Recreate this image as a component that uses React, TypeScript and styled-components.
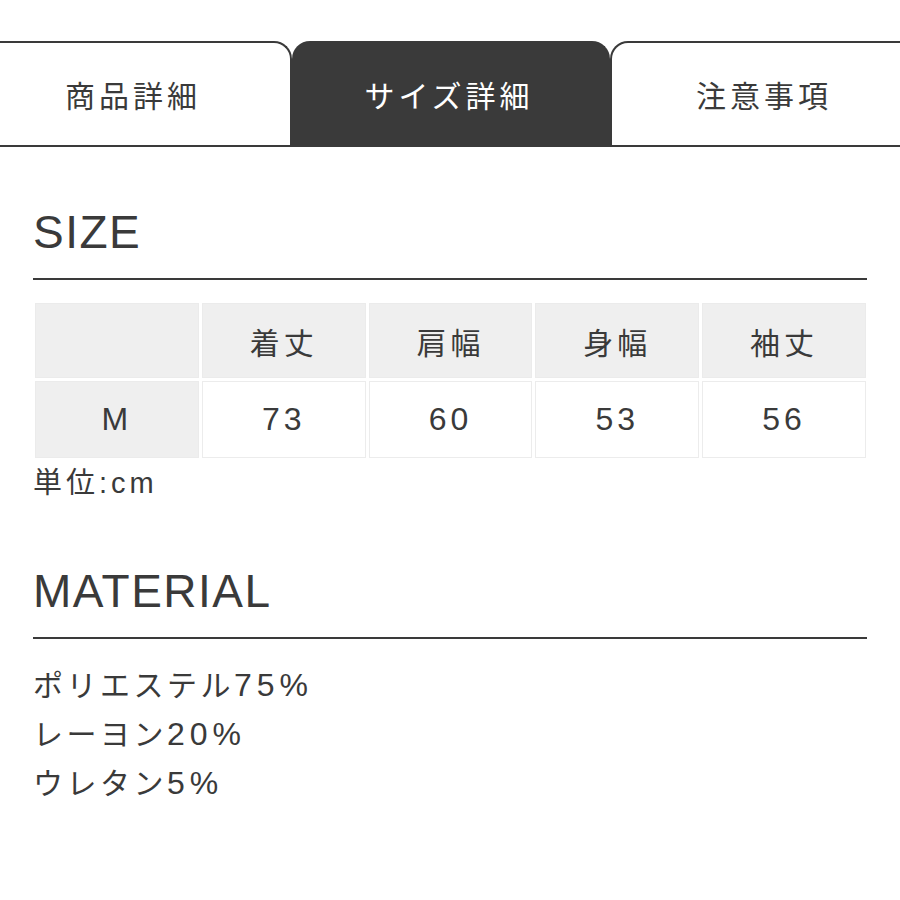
import React from "react";
import styled, { createGlobalStyle } from "styled-components";

const Global = createGlobalStyle`
  html, body { margin: 0; padding: 0; background: #fff; }
  body { overflow: hidden; font-family: "Liberation Sans", "Noto Sans CJK JP", sans-serif; color: #3a3a3a; }
`;

const Page = styled.div`
  width: 900px;
  height: 900px;
  overflow: hidden;
  background: #fff;
`;

const TabStrip = styled.div`
  margin-top: 41px;
  margin-left: -26px;
  width: 954px;
  display: flex;
  border-bottom: 2px solid #3a3a3a;
`;

const Tab = styled.div<{ $active?: boolean; $shift?: number }>`
  box-sizing: border-box;
  width: 318px;
  height: 104px;
  display: flex;
  align-items: center;
  justify-content: center;
  border: 2px solid #3a3a3a;
  border-bottom: none;
  border-radius: 18px 18px 0 0;
  background: ${(p) => (p.$active ? "#3a3a3a" : "#fff")};
  color: ${(p) => (p.$active ? "#fff" : "#3a3a3a")};
  font-family: "Noto Sans CJK JP", sans-serif;
  font-size: 30px;
  letter-spacing: 4px;
  padding-right: ${(p) => p.$shift ?? 0}px;
`;

const Content = styled.div`
  padding: 0 33px;
`;

const Heading = styled.h2<{ $top: number }>`
  margin: ${(p) => p.$top}px 0 0;
  font-family: "Liberation Sans", "Noto Sans CJK JP", sans-serif;
  font-weight: 400;
  font-size: 46px;
  line-height: 46px;
  letter-spacing: 1.5px;
  color: #3a3a3a;
  padding-bottom: 23px;
  border-bottom: 2px solid #3a3a3a;
`;

const Grid = styled.div`
  margin: 23px 1px 0 2px;
  display: grid;
  grid-template-columns: repeat(5, 1fr);
  grid-template-rows: 75px 77px;
  gap: 3px;
`;

const Cell = styled.div<{ $shaded?: boolean }>`
  box-sizing: border-box;
  display: flex;
  align-items: center;
  justify-content: center;
  background: ${(p) => (p.$shaded ? "#efefef" : "#fff")};
  border: 1px solid ${(p) => (p.$shaded ? "#ebebeb" : "#ececec")};
  font-family: "Liberation Sans", "Noto Sans CJK JP", sans-serif;
  font-size: 30px;
  letter-spacing: 4px;
  color: #3a3a3a;
`;

const Num = styled.span`
  font-size: 32px;
  letter-spacing: 4px;
`;

const Unit = styled.div`
  margin-top: 5px;
  font-size: 29px;
  line-height: 40px;
  letter-spacing: 4px;
  font-family: "Liberation Sans", "Noto Sans CJK JP", sans-serif;
`;

const MaterialList = styled.div`
  margin-top: 22px;
  font-family: "Liberation Sans", "Noto Sans CJK JP", sans-serif;
  font-size: 30px;
  line-height: 48px;
  letter-spacing: 3.5px;
`;

const Ratio = styled.span`
  font-size: 32px;
  letter-spacing: 5px;
`;

const headers = ["", "着丈", "肩幅", "身幅", "袖丈"];
const values = ["M", "73", "60", "53", "56"];
const materials = [
  ["ポリエステル", "75%"],
  ["レーヨン", "20%"],
  ["ウレタン", "5%"],
];

export default function App() {
  return (
    <Page>
      <Global />
      <TabStrip>
        <Tab>商品詳細</Tab>
        <Tab $active $shift={4}>サイズ詳細</Tab>
        <Tab $shift={10}>注意事項</Tab>
      </TabStrip>
      <Content>
        <Heading $top={62}>SIZE</Heading>
        <Grid>
          {headers.map((h, i) => (
            <Cell key={"h" + i} $shaded>
              {h}
            </Cell>
          ))}
          {values.map((v, i) => (
            <Cell key={"v" + i} $shaded={i === 0}>
              <Num>{v}</Num>
            </Cell>
          ))}
        </Grid>
        <Unit>単位:cm</Unit>
        <Heading $top={65}>MATERIAL</Heading>
        <MaterialList>
          {materials.map(([name, pct]) => (
            <div key={name}>
              {name}
              <Ratio>{pct}</Ratio>
            </div>
          ))}
        </MaterialList>
      </Content>
    </Page>
  );
}
